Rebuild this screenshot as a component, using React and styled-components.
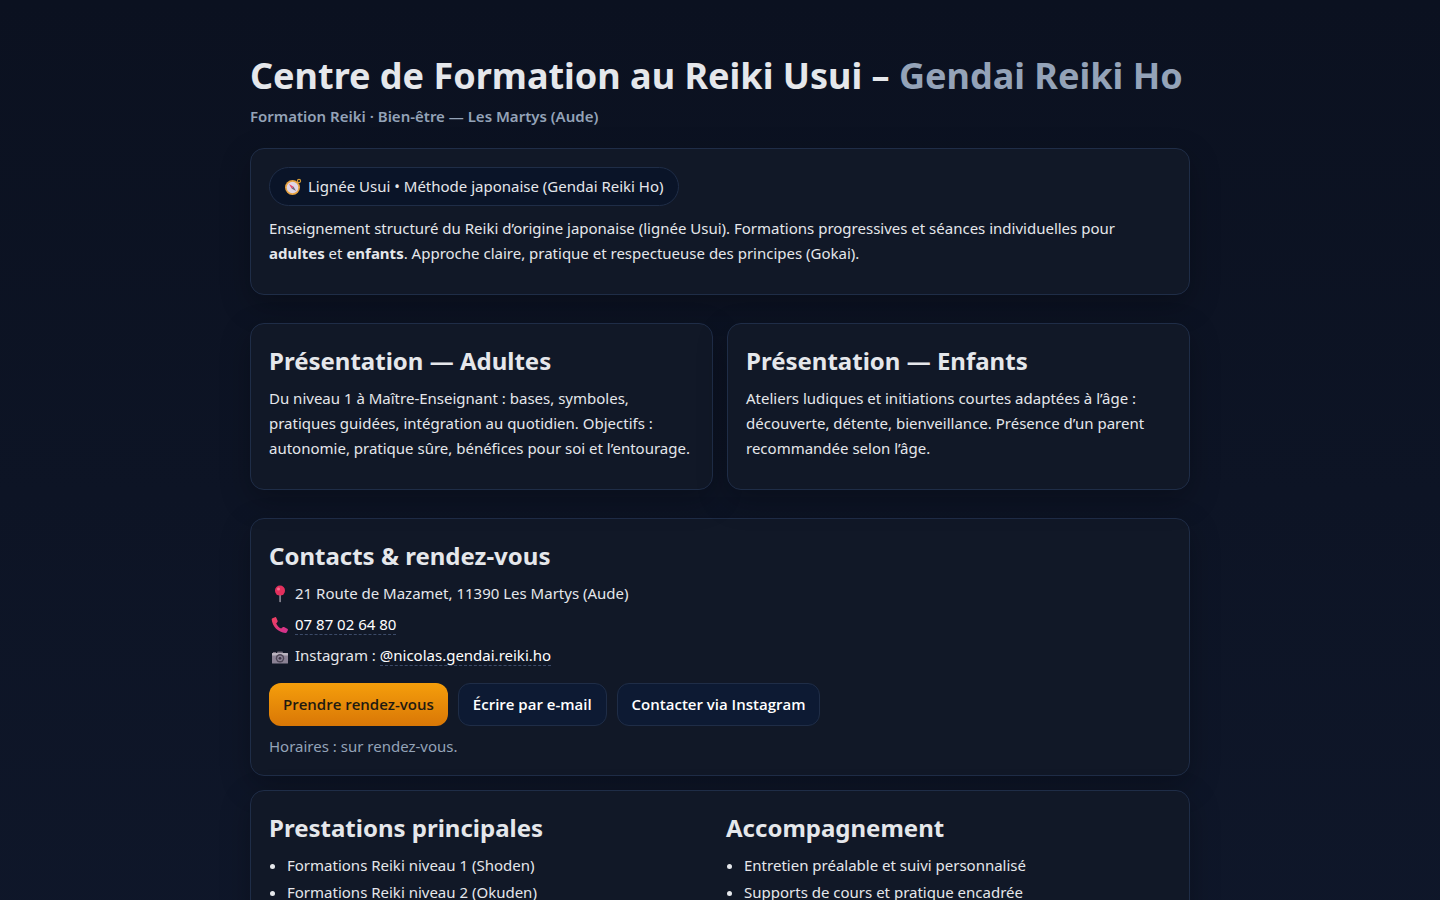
import React from 'react'
import styled, { createGlobalStyle, css } from 'styled-components'

const GlobalStyle = createGlobalStyle`
  * {
    box-sizing: border-box;
  }
  body {
    margin: 0;
    min-height: 100vh;
    background: linear-gradient(180deg, #0b1120, #0f172a);
    color: #e5e7eb;
    font-family: 'Noto Sans', 'Open Sans', sans-serif;
    font-size: 15px;
    line-height: 25px;
  }
`

const Page = styled.main`
  max-width: 980px;
  margin: 0 auto;
  padding: 48px 20px;
`

const Header = styled.header`
  margin-bottom: 19px;
`

const Title = styled.h1`
  margin: 0;
  font-size: 36px;
  line-height: 56px;
  font-weight: 700;

  span {
    color: #94a3b8;
  }
`

const Subtitle = styled.p`
  margin: 0;
  color: #94a3b8;
  font-weight: 600;
`

const Card = styled.section`
  padding: 18px;
  margin-bottom: ${({ $gap }) => $gap || 14}px;
  background: #111827;
  border: 1px solid #1f2d47;
  border-radius: 14px;
  box-shadow: 0 10px 30px rgba(0, 0, 0, 0.25);
`

const Pair = styled.div`
  display: grid;
  grid-template-columns: 1fr 1fr;
  gap: 14px;
  margin-bottom: 28px;

  ${Card} {
    margin-bottom: 0;
  }
`

const Columns = styled.div`
  display: grid;
  grid-template-columns: 1fr 1fr;
  gap: 12px;
`

const Heading = styled.h2`
  margin: 0 0 6px;
  font-size: 24px;
  line-height: 38px;
  font-weight: 700;
`

const Text = styled.p`
  margin: 0 0 10px;
`

const Intro = styled(Text)`
  max-width: 880px;
`

const Badge = styled.div`
  display: inline-flex;
  align-items: center;
  gap: 6px;
  padding: 6px 14px;
  margin-bottom: 10px;
  background: #0a1428;
  border: 1px solid #1f2d47;
  border-radius: 999px;
`

const ContactList = styled.address`
  display: flex;
  flex-direction: column;
  gap: 6px;
  font-style: normal;
`

const ContactRow = styled.div`
  display: flex;
  align-items: center;
  gap: 6px;
  min-height: 25px;
  padding-left: 2px;
`

const Icon = styled.svg`
  width: 18px;
  height: 18px;
  flex: none;
`

const TextLink = styled.a`
  color: #ffffff;
  text-decoration: none;
  line-height: 20px;
  border-bottom: 1px dashed #3b4a68;
`

const Actions = styled.div`
  display: flex;
  flex-wrap: wrap;
  gap: 10px;
  margin: 15px 0 10px;
`

const Button = styled.button`
  padding: 8px 14px;
  font: inherit;
  font-family: 'Open Sans', 'Noto Sans', sans-serif;
  font-weight: 600;
  color: #ffffff;
  background: #0d1a33;
  border: 1px solid #1f2d47;
  border-radius: 12px;
  cursor: pointer;
  ${({ $primary }) => $primary && css`
    color: #1f1a10;
    background: linear-gradient(180deg, #f59e0b, #d97706);
    border: 0;
  `}
`

const Hours = styled.p`
  margin: 0;
  line-height: 21px;
  color: #94a3b8;
`

const List = styled.ul`
  display: flex;
  flex-direction: column;
  gap: 2px;
  margin: 0;
  padding-left: 18px;
`

const CompassIcon = () => (
  <Icon viewBox="0 0 18 18" aria-hidden="true">
    <circle cx="15" cy="3" r="1.6" fill="none" stroke="#d39a35" strokeWidth="1.1" />
    <circle cx="8.5" cy="9.5" r="7.5" fill="#e9a441" />
    <circle cx="8.5" cy="9.5" r="5.8" fill="#e0d6e6" />
    <path d="M5 6 9.6 8.7 7.6 10.6z" fill="#e0486b" />
    <path d="M12 13 9.6 8.7 7.6 10.6z" fill="#6d6477" />
  </Icon>
)

const PinIcon = () => (
  <Icon viewBox="0 0 18 18" aria-hidden="true">
    <path d="M8.3 9h1.6v7.3l-.8 1.2-.8-1.2z" fill="#8d8996" />
    <circle cx="9" cy="5.6" r="5" fill="#e3305d" />
    <circle cx="7.5" cy="4" r="1.5" fill="#fa6f91" />
  </Icon>
)

const PhoneIcon = () => (
  <Icon viewBox="0 0 18 18" aria-hidden="true">
    <defs>
      <linearGradient id="phone" x1="0" y1="0" x2="1" y2="1">
        <stop offset="0" stopColor="#f0405d" />
        <stop offset="1" stopColor="#cf2f92" />
      </linearGradient>
    </defs>
    <path
      d="M1.5 2.2 4 1.2c.6-.2 1 0 1.3.5l1.3 3c.2.5.1.9-.2 1.3L5.2 7.4c1 2.3 2.6 4 4.9 5.1l1.6-1.3c.4-.3.8-.3 1.3-.1l3.3 1.7c.6.3.8.8.5 1.4l-1 2c-.3.6-.8.9-1.5.8C7.3 16.5 1.4 10.7.7 3.6c-.1-.7.2-1.2.8-1.4z"
      fill="url(#phone)"
    />
  </Icon>
)

const CameraIcon = () => (
  <Icon viewBox="0 0 18 18" aria-hidden="true">
    <path d="M2 5h3v2H2zM6.5 4.5h5l1 2.5h-7z" fill="#746c7c" />
    <rect x="1" y="6" width="16" height="10.5" rx="0.6" fill="#8a8194" />
    <rect x="1" y="6" width="16" height="2.5" rx="0.6" fill="#b9b3bf" />
    <circle cx="9" cy="11.3" r="4.2" fill="#4c4556" />
    <circle cx="9" cy="11.3" r="2.8" fill="#8d8498" />
    <circle cx="9" cy="11.3" r="1.4" fill="#3c3546" />
  </Icon>
)

const services = [
  'Formations Reiki niveau 1 (Shoden)',
  'Formations Reiki niveau 2 (Okuden)',
]

const support = [
  'Entretien préalable et suivi personnalisé',
  'Supports de cours et pratique encadrée',
]

const App = () => (
  <>
    <GlobalStyle />
    <Page>
      <Header>
        <Title>
          Centre de Formation au Reiki Usui – <span>Gendai Reiki Ho</span>
        </Title>
        <Subtitle>Formation Reiki · Bien-être — Les Martys (Aude)</Subtitle>
      </Header>

      <Card $gap={28}>
        <Badge>
          <CompassIcon />
          Lignée Usui • Méthode japonaise (Gendai Reiki Ho)
        </Badge>
        <Intro>
          Enseignement structuré du Reiki d’origine japonaise (lignée Usui). Formations
          progressives et séances individuelles pour <strong>adultes</strong> et{' '}
          <strong>enfants</strong>. Approche claire, pratique et respectueuse des principes
          (Gokai).
        </Intro>
      </Card>

      <Pair>
        <Card>
          <Heading>Présentation — Adultes</Heading>
          <Text>
            Du niveau 1 à Maître-Enseignant : bases, symboles, pratiques guidées, intégration au
            quotidien. Objectifs : autonomie, pratique sûre, bénéfices pour soi et l’entourage.
          </Text>
        </Card>
        <Card>
          <Heading>Présentation — Enfants</Heading>
          <Text>
            Ateliers ludiques et initiations courtes adaptées à l’âge : découverte, détente,
            bienveillance. Présence d’un parent recommandée selon l’âge.
          </Text>
        </Card>
      </Pair>

      <Card>
        <Heading>Contacts &amp; rendez-vous</Heading>
        <ContactList>
          <ContactRow>
            <PinIcon />
            <span>21 Route de Mazamet, 11390 Les Martys (Aude)</span>
          </ContactRow>
          <ContactRow>
            <PhoneIcon />
            <TextLink href="tel:+33787026480">07 87 02 64 80</TextLink>
          </ContactRow>
          <ContactRow>
            <CameraIcon />
            <span>
              Instagram : <TextLink href="#instagram">@nicolas.gendai.reiki.ho</TextLink>
            </span>
          </ContactRow>
        </ContactList>
        <Actions>
          <Button $primary>Prendre rendez-vous</Button>
          <Button>Écrire par e-mail</Button>
          <Button>Contacter via Instagram</Button>
        </Actions>
        <Hours>Horaires : sur rendez-vous.</Hours>
      </Card>

      <Card>
        <Columns>
          <div>
            <Heading>Prestations principales</Heading>
            <List>
              {services.map((item) => (
                <li key={item}>{item}</li>
              ))}
            </List>
          </div>
          <div>
            <Heading>Accompagnement</Heading>
            <List>
              {support.map((item) => (
                <li key={item}>{item}</li>
              ))}
            </List>
          </div>
        </Columns>
      </Card>
    </Page>
  </>
)

export default App
